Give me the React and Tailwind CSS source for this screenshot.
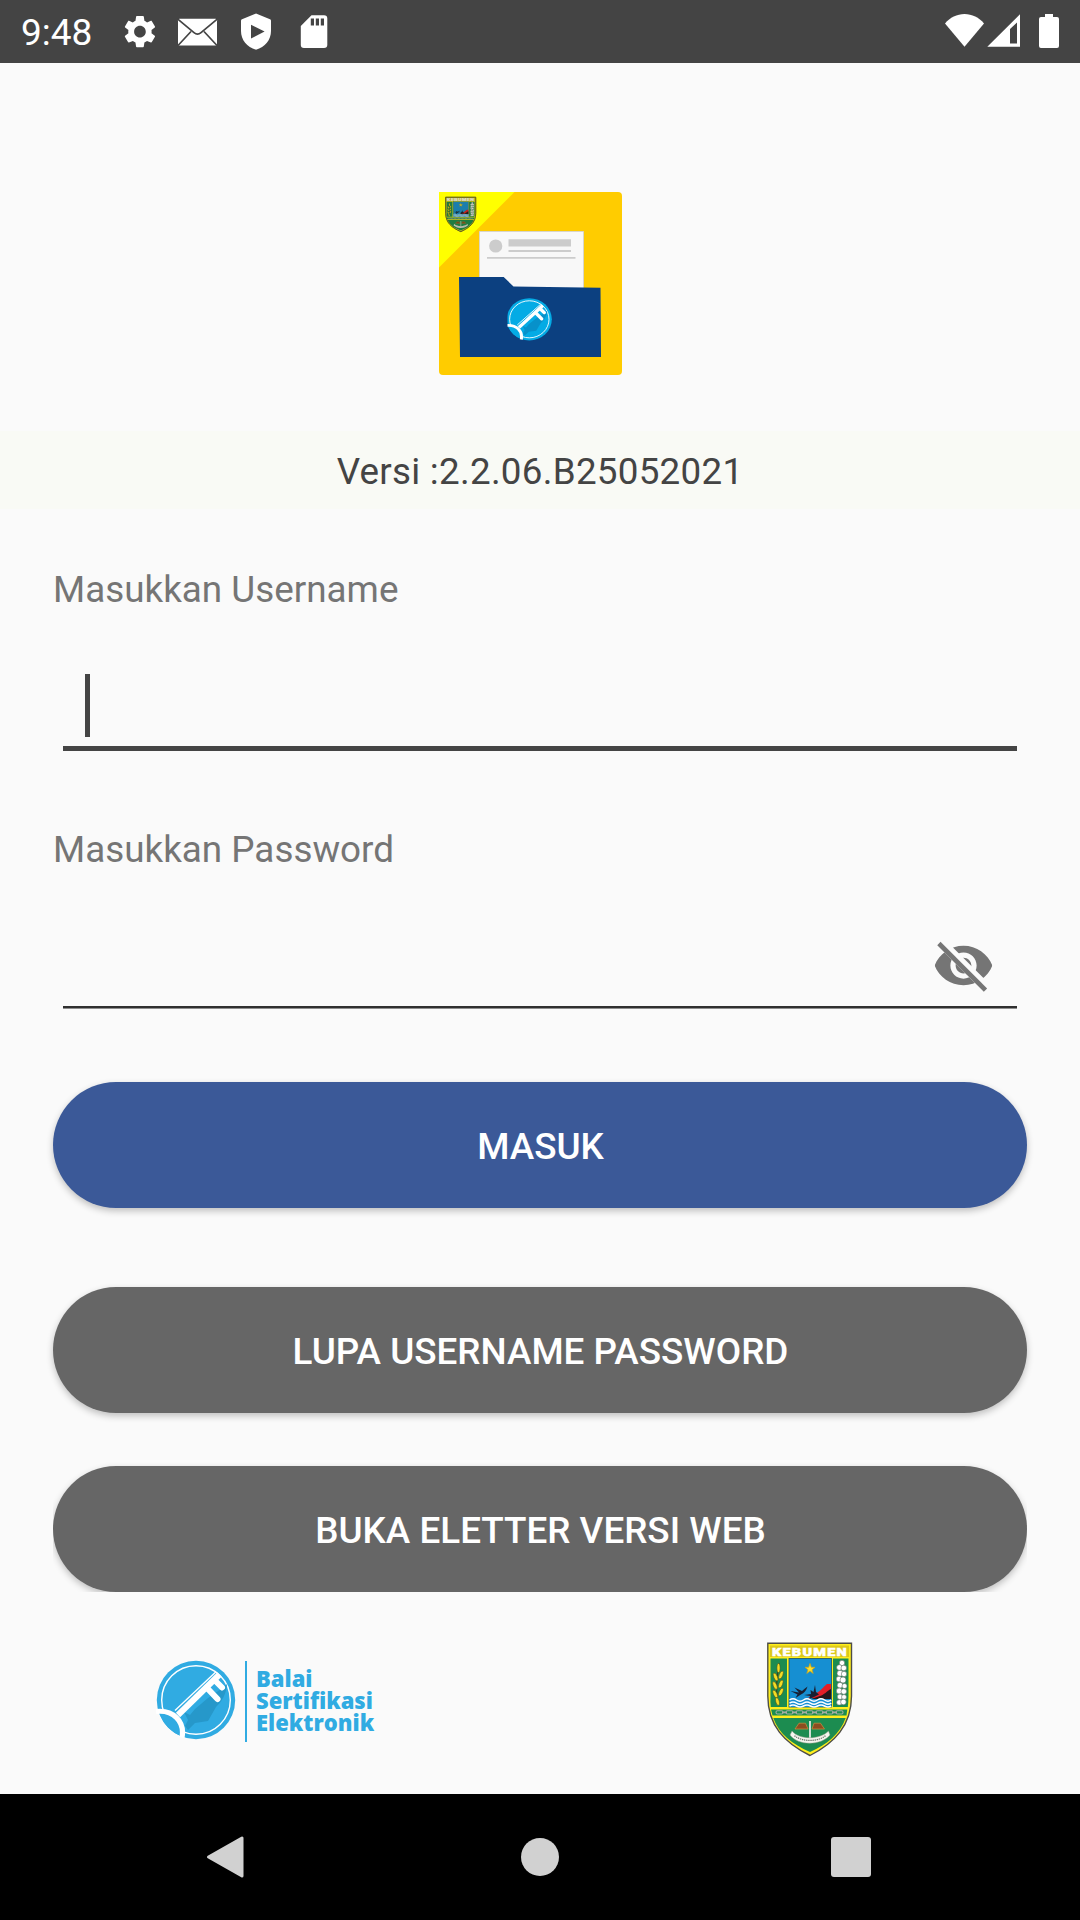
function StatusBar() {
  return (
    <header className="flex h-[63px] w-full items-center bg-[#444444] text-white">
      <div className="ml-[21px] w-[100px] pt-[2px] text-[37px] leading-[63px]">9:48</div>
      <svg className="h-[63px] w-[220px]" viewBox="121 0 220 63" fill="#fff">
        <path
          transform="translate(120.5 12.2) scale(1.62)"
          d="M19.14 12.94c.04-.3.06-.61.06-.94 0-.32-.02-.64-.07-.94l2.03-1.58c.18-.14.23-.41.12-.61l-1.92-3.32c-.12-.22-.37-.29-.59-.22l-2.39.96c-.5-.38-1.03-.7-1.62-.94l-.36-2.54c-.04-.24-.24-.41-.48-.41h-3.84c-.24 0-.43.17-.47.41l-.36 2.54c-.59.24-1.13.57-1.62.94l-2.39-.96c-.22-.08-.47 0-.59.22L2.74 8.87c-.12.21-.08.47.12.61l2.03 1.58c-.05.3-.09.63-.09.94s.02.64.07.94l-2.03 1.58c-.18.14-.23.41-.12.61l1.92 3.32c.12.22.37.29.59.22l2.39-.96c.5.38 1.03.7 1.62.94l.36 2.54c.05.24.24.41.48.41h3.84c.24 0 .44-.17.47-.41l.36-2.54c.59-.24 1.13-.56 1.62-.94l2.39.96c.22.08.47 0 .59-.22l1.92-3.32c.12-.22.07-.47-.12-.61l-2.01-1.58zM12 15.6c-1.98 0-3.6-1.62-3.6-3.6s1.62-3.6 3.6-3.6 3.6 1.62 3.6 3.6-1.62 3.6-3.6 3.6z"
        />
        <rect x="178" y="18.7" width="39" height="26.8" rx="1.5" />
        <path
          d="M177.5 18.8L194 32.6Q197.5 35.6 201 32.6L217.5 18.8M178 45.5L191 31.5M217 45.5L204 31.5"
          fill="none"
          stroke="#444"
          strokeWidth="1.7"
        />
        <path
          fillRule="evenodd"
          d="M256 13.6L270 19.2Q271 19.6 271 20.7V31C271 40 265 47 256 49.8C247 47 241 40 241 31V20.7Q241 19.6 242 19.2ZM251 24.8V38.4L264.6 31.6Z"
        />
        <path
          fillRule="evenodd"
          d="M311.5 15.3H324Q327.3 15.3 327.3 18.6V45Q327.3 48 324 48H304Q300.8 48 300.8 45V26ZM310.8 18.5V25.5H314V18.5ZM315.8 18.5V25.5H319V18.5ZM320.8 18.5V25.5H324V18.5Z"
        />
      </svg>
      <svg className="ml-auto h-[63px] w-[140px]" viewBox="940 0 140 63" fill="#fff">
        <path d="M945 23.4C950 17.5 957 14 964.5 14S979 17.5 984 23.4L964.5 46.8Z" />
        <path fillRule="evenodd" d="M1020 14.2V46.8H987.3ZM1017 22.4L1010 29V43.5H1017Z" />
        <path d="M1045 14H1053V17H1057Q1059 17 1059 19V46Q1059 48 1057 48H1041Q1039 48 1039 46V19Q1039 17 1041 17H1045Z" />
      </svg>
    </header>
  )
}

/* Regency shield, drawn on a 120 x 140 canvas */
function ShieldArt() {
  return (
    <>
      <path d="M17.8 13.2H101.5V66C101.5 96 84 113 60 125.5C35 113 17.8 96 17.8 66Z" fill="#ffee1c" stroke="#4d4d48" strokeWidth="1.4" />
      <rect x="20" y="15.5" width="79" height="11.5" fill="#ddc91a" />
      <text x="22" y="25.6" fontFamily="Roboto, sans-serif" fontWeight="900" fontSize="11.5" fill="#fff" stroke="#fff" strokeWidth=".5" letterSpacing="1" textLength="76" lengthAdjust="spacingAndGlyphs">
        KEBUMEN
      </text>
      <path d="M20.5 28.5H37V77H20.8Q20.2 72 20.5 66Z" fill="#1c8c50" />
      <path d="M83 28.5H98.5V66Q98.5 72 97.8 77H83Z" fill="#1c8c50" />
      <rect x="39" y="28.5" width="42.5" height="48.5" fill="#168fd2" stroke="#18506b" strokeWidth=".8" />
      <path d="M60 33.5L61.3 37.3H65L62 39.7L63.2 43.4L60 41L56.8 43.4L58 39.7L55 37.3H58.7Z" fill="#ffe02c" stroke="#c9a61d" strokeWidth=".8" />
      <path d="M81 54V68H58C62 66 63 64 66 63C70 62 73 57 77 54Z" fill="#e31e27" />
      <path d="M81 59C77 61 74 65 70 66L61 69H81Z" fill="#26171b" />
      <path d="M40.5 61L49 62.5L44.5 57.5L52 61C54 59.5 56 57.5 57.5 56.5C56.5 60.5 54 63 51 64.5L45.5 68L47.5 64.5Z" fill="#182033" />
      <path d="M54 65L61 64L60.5 60L63.5 62L65 55L66 62L69 64.5L64 67L59 69L60 66Z" fill="#182033" />
      <path d="M39.5 69H81.2V77H39.5Z" fill="#168fd2" />
      <path d="M39.5 70Q43 67.5 46.5 70T53.5 70T60.5 70T67.5 70T74.5 70T81.2 70M39.5 73.2Q43 71 46.5 73.2T53.5 73.2T60.5 73.2T67.5 73.2T74.5 73.2T81.2 73.2M39.5 76Q43 74 46.5 76T53.5 76T60.5 76T67.5 76T74.5 76T81.2 76" fill="none" stroke="#fff" strokeWidth="1.5" />
      <path d="M28 73C25 60 27 45 29 33" fill="none" stroke="#33451c" strokeWidth="1.2" />
      <g fill="#f3dc24" stroke="#454818" strokeWidth=".5">
        <ellipse cx="28.5" cy="38" rx="1.6" ry="4.5" />
        <ellipse cx="25.6" cy="47" rx="1.8" ry="4.2" transform="rotate(-22 25.6 47)" />
        <ellipse cx="31" cy="45" rx="1.8" ry="4.2" transform="rotate(22 31 45)" />
        <ellipse cx="25" cy="55.5" rx="1.8" ry="4.2" transform="rotate(-22 25 55.5)" />
        <ellipse cx="30.8" cy="54" rx="1.8" ry="4.2" transform="rotate(22 30.8 54)" />
        <ellipse cx="25.2" cy="64" rx="1.8" ry="4.2" transform="rotate(-25 25.2 64)" />
        <ellipse cx="31" cy="62" rx="1.8" ry="4.2" transform="rotate(25 31 62)" />
        <ellipse cx="27.5" cy="71.5" rx="1.8" ry="4" transform="rotate(-15 27.5 71.5)" />
      </g>
      <g fill="#fff" stroke="#657169" strokeWidth=".6">
        <circle cx="92" cy="33" r="2.7" />
        <circle cx="89.4" cy="37.5" r="2.8" /><circle cx="93.8" cy="38" r="2.8" />
        <circle cx="90" cy="43.3" r="3" /><circle cx="94" cy="44" r="2.7" />
        <circle cx="89" cy="49" r="2.8" /><circle cx="93" cy="50" r="3" />
        <circle cx="90" cy="55.2" r="2.8" /><circle cx="94.5" cy="56" r="2.5" />
        <circle cx="89.2" cy="61" r="2.9" /><circle cx="93.8" cy="61.5" r="2.8" />
        <circle cx="90" cy="66.8" r="2.7" /><circle cx="94" cy="67" r="2.5" />
        <circle cx="89.3" cy="72.4" r="2.7" /><circle cx="93.4" cy="72" r="2.8" />
      </g>
      <path d="M21 79.5H97.3L96.5 85.5H22.5Z" fill="#1c8c50" />
      <g fill="none" stroke="#a5aca2" strokeWidth="1.1">
        <rect x="26" y="80.8" width="7" height="3.2" rx="1.4" />
        <rect x="36" y="80.8" width="7" height="3.2" rx="1.4" />
        <rect x="46" y="80.8" width="7" height="3.2" rx="1.4" />
        <rect x="56" y="80.8" width="7" height="3.2" rx="1.4" />
        <rect x="66" y="80.8" width="7" height="3.2" rx="1.4" />
        <rect x="76" y="80.8" width="7" height="3.2" rx="1.4" />
        <rect x="86" y="80.8" width="7" height="3.2" rx="1.4" />
        <path d="M32 82.4H37M42 82.4H47M52 82.4H57M62 82.4H67M72 82.4H77M82 82.4H87" strokeWidth="1.6" />
      </g>
      <path d="M23.3 88H95.7C90 104 77 114.5 60 122C42 114 29 104 23.3 88Z" fill="#1c8c50" />
      <path d="M49 93.2H55.5L58 99H45ZM64 93.2H70.5L74.5 99H62Z" fill="#8c4d20" stroke="#d08e3e" strokeWidth=".7" />
      <path d="M60 91V109" stroke="#e8e8e5" strokeWidth="1.8" />
      <path d="M42 101C49 110 70 110 78.5 101L80 105C71 116 48 116 40 105Z" fill="#f5f5ef" stroke="#8a9684" strokeWidth=".5" />
      <path d="M44.5 105.7C52 112 68 112 75.5 105.7" fill="none" stroke="#697169" strokeWidth="1.2" strokeDasharray="1.3 .8" />
    </>
  )
}

/* Round key emblem on an 80 x 80 canvas */
function KeyEmblem({ color, shade, line = 1.4 }) {
  return (
    <>
      <circle cx="40" cy="40" r="39.2" fill={color} />
      <circle cx="40" cy="40" r="34.3" fill="none" stroke="#fff" strokeWidth={line} />
      <path d="M68 27L71 24C70 35 66 41 60 47L52 61L39 63L32 70L29 66L32 60L28 52L34 55L39 49L52 38Z" fill={shade} />
      <path d="M19 50.5L60 11.8" stroke="#fff" strokeWidth={line} />
      <path d="M3 52C19 50 30 62 26.5 76.6A39 39 0 0 1 3 52Z" fill={color} />
      <path d="M22 55L63.5 14.5" stroke="#fff" strokeWidth="6" />
      <path d="M52 29L61.5 39M59 20.5L66 27.5" stroke="#fff" strokeWidth="6" strokeLinecap="round" />
      <path d="M0 51.5C17 49.5 29 61 26 77.5" fill="none" stroke="#fff" strokeWidth="5.2" />
    </>
  )
}

function AppLogo() {
  return (
    <svg className="h-[183px] w-[183px]" viewBox="0 0 183 183">
      <path d="M0 0H179Q183 0 183 4V179Q183 183 179 183H4Q0 183 0 179Z" fill="#ffcc00" />
      <path d="M0 0H75.5L0 75.5Z" fill="#ffff00" />
      <g transform="translate(.2 1) scale(.36 .308)">
        <ShieldArt />
        <path d="M18 14H101.5V66C101.5 96 84 113 60 125.5C35 113 18 96 18 66Z" fill="#303000" fillOpacity=".18" stroke="#55551a" strokeWidth="2.5" />
      </g>
      <path d="M40.5 39.5H144.5V110H40.5Z" fill="#f8f8f8" stroke="#d9d5c8" strokeWidth="1" />
      <circle cx="56.7" cy="54" r="6.6" fill="#ccc" />
      <path d="M69.5 47.3H132V54.5H69.5ZM69.5 58H132V60H69.5ZM48 65H136.5V66.7H48Z" fill="#ccc" />
      <path d="M20 85H64.7L74.5 94.5L161.5 95.8L162 165H21Z" fill="#0c4080" />
      <svg x="68.5" y="105.7" width="44.8" height="43.2" viewBox="2 0 78 80" preserveAspectRatio="none">
        <KeyEmblem color="#04abe5" shade="#0791ca" line={1.6} />
      </svg>
    </svg>
  )
}

function Label({ children }) {
  return <div className="h-[50px] text-[36.85px] leading-[50px] text-[#757575]">{children}</div>
}

function Button({ className, children }) {
  return (
    <button className={"block h-[126px] w-full shrink-0 rounded-full pt-[3px] pl-[1px] text-[36.85px] leading-[123px] font-medium text-white shadow-[0_3px_7px_rgba(0,0,0,0.24)] " + className}>
      {children}
    </button>
  )
}

export default function App() {
  return (
    <div className="flex h-[1920px] w-[1080px] flex-col overflow-hidden bg-[#fafafa] font-[Roboto,sans-serif]">
      <StatusBar />
      <main className="flex h-[1731px] flex-col">
        <div className="flex h-[368px] justify-center pt-[129px] pr-[19px]">
          <AppLogo />
        </div>
        <div className="h-[78px] bg-[#f9faf5] pt-[1px] text-center text-[36.75px] leading-[80px] tracking-[0.28px] text-[#444444]">
          Versi :2.2.06.B25052021
        </div>
        <form className="flex flex-col px-[53px] pt-[56px]">
          <Label>Masukkan Username</Label>
          <div className="mx-[10px] mt-[59px] h-[77px] border-b-[5px] border-[#444444] pl-[22px]">
            <div className="h-[63px] w-[5px] bg-[#444444]" />
          </div>
          <div className="mt-[74px]"><Label>Masukkan Password</Label></div>
          <div className="mx-[10px] mt-[59px] flex h-[72px] justify-end pr-[22px]">
            <svg className="h-[63px] w-[63px]" viewBox="0 0 24 24" fill="#757575">
              <clipPath id="eye-cut">
                <path d="M2 4.27L19.73 22L22.27 19.46L4.54 1.73V1H23V23H1V4.27Z" />
              </clipPath>
              <path
                clipPath="url(#eye-cut)"
                d="M12 4.5C7 4.5 2.73 7.61 1 12c1.73 4.39 6 7.5 11 7.5s9.27-3.11 11-7.5c-1.73-4.39-6-7.5-11-7.5zM12 17c-2.76 0-5-2.24-5-5s2.24-5 5-5 5 2.24 5 5-2.24 5-5 5zm0-8c-1.66 0-3 1.34-3 3s1.34 3 3 3 3-1.34 3-3-1.34-3-3-3z"
              />
              <path d="M3.27 4.27L19.74 20.74" stroke="#757575" strokeWidth="1.8" strokeLinecap="square" />
            </svg>
          </div>
          <div className="mx-[10px] h-[3px] border-b border-[#8e8e8e] bg-[#303030]" />
          <Button className="mt-[73px] bg-[#3b5998]">MASUK</Button>
          <Button className="mt-[79px] bg-[#666666]">LUPA USERNAME PASSWORD</Button>
          <div className="mt-[48px] h-[131px] overflow-hidden pt-[5px]">
            <Button className="bg-[#666666]">BUKA ELETTER VERSI WEB</Button>
          </div>
        </form>
        <footer className="flex flex-1 items-start justify-between bg-[#fafafa] pr-[210px] pl-[156px]">
          <div className="flex pt-[69px]">
            <svg className="-mt-px h-[80px] w-[80px]" viewBox="0 0 80 80"><KeyEmblem color="#30abe2" shade="#2698ca" /></svg>
            <div className="ml-[9px] h-[81px] w-[2px] bg-[#30abe2]" />
            <div className="ml-[9px] pt-[6px] font-['Open_Sans',sans-serif] text-[22px] leading-[22.2px] font-extrabold text-[#30abe2]">
              <div>Balai</div>
              <div>Sertifikasi</div>
              <div>Elektronik</div>
            </div>
          </div>
          <svg className="mt-[38px] h-[140px] w-[120px]" viewBox="0 0 120 140"><ShieldArt /></svg>
        </footer>
      </main>
      <nav className="grid h-[126px] grid-cols-[1fr_38px_1fr] items-center bg-black">
        <svg className="ml-[205px] h-[46px] w-[40px]" viewBox="0 0 40 46"><path d="M3.5 23L37 4V42Z" fill="#d1d1d1" stroke="#d1d1d1" strokeWidth="3" strokeLinejoin="round" /></svg>
        <div className="h-[38px] w-[38px] rounded-full bg-[#d1d1d1]" />
        <div className="mr-[209px] h-[40px] w-[40px] justify-self-end rounded-[3px] bg-[#d1d1d1]" />
      </nav>
    </div>
  )
}
